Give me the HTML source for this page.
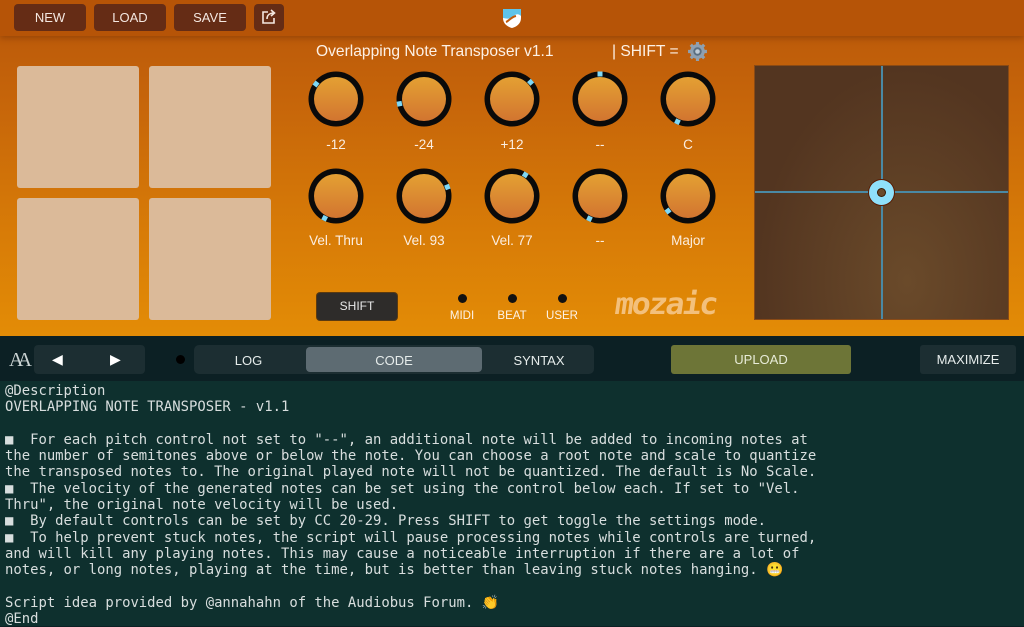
<!DOCTYPE html>
<html><head><meta charset="utf-8"><style>
*{margin:0;padding:0;box-sizing:border-box}
body{width:1024px;height:626px;overflow:hidden;font-family:"Liberation Sans","DejaVu Sans",sans-serif;background:#0c2024;position:relative}
#top{position:absolute;left:0;top:0;width:1024px;height:336px;background:linear-gradient(#b8560a 0%,#c6650a 30%,#d87c07 70%,#e38c06 100%)}
#bar{position:absolute;left:0;top:0;width:1024px;height:36px;background:#b65407;box-shadow:0 2px 6px rgba(80,30,0,.35)}
.tb{position:absolute;top:4px;height:27px;background:#652c15;border-radius:4px;color:#f4e7e0;font-size:13px;text-align:center;line-height:27px}
.pad{position:absolute;width:122px;height:122px;background:#dbba99;border-radius:3px}
.lbl{position:absolute;width:80px;text-align:center;color:#fbeee2;font-size:13.5px}
#xy{position:absolute;left:755px;top:66px;width:253px;height:253px;background:radial-gradient(ellipse at 60% 85%,#6a4a2a,#533520 70%);box-shadow:0 0 0 1px #8a4a15}
.ab{position:absolute;color:#e6eceb;font-size:13px;text-align:center}
#code{position:absolute;left:0;top:381px;width:1024px;height:245px;background:#0e302e;font-family:"DejaVu Sans Mono","Liberation Mono",monospace;font-size:13.9px;line-height:16.3px;color:#d8dede;padding:2px 5px;white-space:pre}
</style></head><body>
<div id="top"></div>
<div id="bar"></div>
<div class="tb" style="left:14px;width:72px">NEW</div>
<div class="tb" style="left:94px;width:72px">LOAD</div>
<div class="tb" style="left:174px;width:72px">SAVE</div>
<div class="tb" style="left:254px;width:30px"><svg width="16" height="16" viewBox="0 0 16 16" style="margin-top:5px"><path d="M7 3H2v11h11V9" fill="none" stroke="#f4e7e0" stroke-width="1.6"/><path d="M6 10c0-4 3-6 7-6M10 1l3.5 3L10 7" fill="none" stroke="#f4e7e0" stroke-width="1.6"/></svg></div>
<svg style="position:absolute;left:501px;top:7px" width="22" height="22" viewBox="0 0 22 22"><path d="M2 2h18v9c0 6-5 9-9 10C7 20 2 17 2 11z" fill="#fff"/><path d="M2 2h18v7c-3-3-6-2-8 1-2 2-5 2-10 1z" fill="#5ec4ea"/><path d="M5 15c3-1 5-5 10-6" stroke="#c25a0a" stroke-width="2" fill="none"/></svg>
<div style="position:absolute;left:316px;top:43px;color:#fdf1e6;font-size:15.6px">Overlapping Note Transposer v1.1</div>
<div style="position:absolute;left:612px;top:43px;color:#fdf1e6;font-size:15.6px">| SHIFT =</div>
<svg style="position:absolute;left:687px;top:41px" width="21" height="21" viewBox="0 0 20 20"><g fill="#8fa0b0"><circle cx="10" cy="10" r="7"/><g stroke="#8fa0b0" stroke-width="3"><path d="M10 1v18M1 10h18M3.6 3.6l12.8 12.8M16.4 3.6 3.6 16.4"/></g></g><circle cx="10" cy="10" r="4" fill="#5a6e80"/><circle cx="10" cy="10" r="2.2" fill="#c0ccd6"/></svg>
<div class="pad" style="left:17px;top:66px"></div>
<div class="pad" style="left:149px;top:66px"></div>
<div class="pad" style="left:17px;top:198px"></div>
<div class="pad" style="left:149px;top:198px"></div>
<svg style="position:absolute;left:0;top:0" width="740" height="260">
<defs><linearGradient id="g" x1="0" y1="0" x2="0" y2="1"><stop offset="0" stop-color="#e4a033"/><stop offset="1" stop-color="#d27530"/></linearGradient></defs>
<g transform="translate(336,99)"><circle r="27.5" fill="#0a0a0a"/><circle r="22" fill="url(#g)"/><rect x="-2.5" y="-27.5" width="5" height="5" fill="#7ed8f6" transform="rotate(-53)"/></g>
<g transform="translate(424,99)"><circle r="27.5" fill="#0a0a0a"/><circle r="22" fill="url(#g)"/><rect x="-2.5" y="-27.5" width="5" height="5" fill="#7ed8f6" transform="rotate(-101)"/></g>
<g transform="translate(512,99)"><circle r="27.5" fill="#0a0a0a"/><circle r="22" fill="url(#g)"/><rect x="-2.5" y="-27.5" width="5" height="5" fill="#7ed8f6" transform="rotate(48)"/></g>
<g transform="translate(600,99)"><circle r="27.5" fill="#0a0a0a"/><circle r="22" fill="url(#g)"/><rect x="-2.5" y="-27.5" width="5" height="5" fill="#7ed8f6" transform="rotate(0)"/></g>
<g transform="translate(688,99)"><circle r="27.5" fill="#0a0a0a"/><circle r="22" fill="url(#g)"/><rect x="-2.5" y="-27.5" width="5" height="5" fill="#7ed8f6" transform="rotate(-155)"/></g>
<g transform="translate(336,196)"><circle r="27.5" fill="#0a0a0a"/><circle r="22" fill="url(#g)"/><rect x="-2.5" y="-27.5" width="5" height="5" fill="#7ed8f6" transform="rotate(-153)"/></g>
<g transform="translate(424,196)"><circle r="27.5" fill="#0a0a0a"/><circle r="22" fill="url(#g)"/><rect x="-2.5" y="-27.5" width="5" height="5" fill="#7ed8f6" transform="rotate(69)"/></g>
<g transform="translate(512,196)"><circle r="27.5" fill="#0a0a0a"/><circle r="22" fill="url(#g)"/><rect x="-2.5" y="-27.5" width="5" height="5" fill="#7ed8f6" transform="rotate(32)"/></g>
<g transform="translate(600,196)"><circle r="27.5" fill="#0a0a0a"/><circle r="22" fill="url(#g)"/><rect x="-2.5" y="-27.5" width="5" height="5" fill="#7ed8f6" transform="rotate(-155)"/></g>
<g transform="translate(688,196)"><circle r="27.5" fill="#0a0a0a"/><circle r="22" fill="url(#g)"/><rect x="-2.5" y="-27.5" width="5" height="5" fill="#7ed8f6" transform="rotate(-127)"/></g>
</svg>
<div class="lbl" style="left:296px;top:137px">-12</div>
<div class="lbl" style="left:384px;top:137px">-24</div>
<div class="lbl" style="left:472px;top:137px">+12</div>
<div class="lbl" style="left:560px;top:137px">--</div>
<div class="lbl" style="left:648px;top:137px">C</div>
<div class="lbl" style="left:286px;top:233px;width:100px">Vel. Thru</div>
<div class="lbl" style="left:384px;top:233px">Vel. 93</div>
<div class="lbl" style="left:472px;top:233px">Vel. 77</div>
<div class="lbl" style="left:560px;top:233px">--</div>
<div class="lbl" style="left:648px;top:233px">Major</div>
<div style="position:absolute;left:317px;top:293px;width:80px;height:27px;background:#2e2c2a;border-radius:3px;color:#e8e8e8;font-size:12px;text-align:center;line-height:27px;box-shadow:0 0 0 1px #5a3a10">SHIFT</div>
<div style="position:absolute;left:458px;top:294px;width:9px;height:9px;border-radius:50%;background:#111"></div>
<div style="position:absolute;left:508px;top:294px;width:9px;height:9px;border-radius:50%;background:#111"></div>
<div style="position:absolute;left:558px;top:294px;width:9px;height:9px;border-radius:50%;background:#111"></div>
<div class="lbl" style="left:422px;top:310px;color:#fdf3e8;font-size:11.5px">MIDI</div>
<div class="lbl" style="left:472px;top:310px;color:#fdf3e8;font-size:11.5px">BEAT</div>
<div class="lbl" style="left:522px;top:310px;color:#fdf3e8;font-size:11.5px">USER</div>
<div style="position:absolute;left:615px;top:288px;width:110px;height:34px;color:#f3c07c;font-size:30px;font-weight:bold;line-height:34px;transform:skewX(-8deg) scaleX(1.05);transform-origin:left;font-family:'DejaVu Sans Mono','Liberation Mono',monospace;letter-spacing:-2px">mozaic</div>
<div id="xy"><div style="position:absolute;left:126px;top:0;width:2px;height:253px;background:#4a89a4"></div><div style="position:absolute;left:0;top:125px;width:253px;height:2px;background:#4a89a4"></div><div style="position:absolute;left:114px;top:114px;width:25px;height:25px;border-radius:50%;background:#8fe0fa;box-shadow:0 0 0 1px #5a1a00"></div><div style="position:absolute;left:123px;top:123px;width:7px;height:7px;border-radius:50%;background:#6a4a2a;box-shadow:0 0 0 1px #3a1a00"></div></div>
<div style="position:absolute;left:9px;top:349px;color:#c9d2d2;font-size:20px;font-family:'Liberation Serif',serif;letter-spacing:-6px">AA</div>
<div style="position:absolute;left:34px;top:345px;width:111px;height:29px;background:#1c2e32;border-radius:4px"></div>
<div class="ab" style="left:52px;top:351px;font-size:14px;color:#fff">◀</div>
<div class="ab" style="left:110px;top:351px;font-size:14px;color:#fff">▶</div>
<div style="position:absolute;left:176px;top:355px;width:9px;height:9px;border-radius:50%;background:#000"></div>
<div style="position:absolute;left:194px;top:345px;width:400px;height:29px;background:#1c2e32;border-radius:5px"></div>
<div style="position:absolute;left:306px;top:347px;width:176px;height:25px;background:#5d6b72;border-radius:4px"></div>
<div class="ab" style="left:200px;top:353px;width:97px">LOG</div>
<div class="ab" style="left:306px;top:353px;width:176px">CODE</div>
<div class="ab" style="left:490px;top:353px;width:98px">SYNTAX</div>
<div style="position:absolute;left:671px;top:345px;width:180px;height:29px;background:#6d7537;border-radius:3px;color:#e8ecd8;font-size:13px;text-align:center;line-height:29px">UPLOAD</div>
<div style="position:absolute;left:920px;top:345px;width:96px;height:29px;background:#1c2e32;border-radius:3px;color:#e6eceb;font-size:13px;text-align:center;line-height:29px">MAXIMIZE</div>
<div id="code">@Description
OVERLAPPING NOTE TRANSPOSER - v1.1

■  For each pitch control not set to "--", an additional note will be added to incoming notes at
the number of semitones above or below the note. You can choose a root note and scale to quantize
the transposed notes to. The original played note will not be quantized. The default is No Scale.
■  The velocity of the generated notes can be set using the control below each. If set to "Vel.
Thru", the original note velocity will be used.
■  By default controls can be set by CC 20-29. Press SHIFT to get toggle the settings mode.
■  To help prevent stuck notes, the script will pause processing notes while controls are turned,
and will kill any playing notes. This may cause a noticeable interruption if there are a lot of
notes, or long notes, playing at the time, but is better than leaving stuck notes hanging. 😬

Script idea provided by @annahahn of the Audiobus Forum. 👏
@End</div>
</body></html>
